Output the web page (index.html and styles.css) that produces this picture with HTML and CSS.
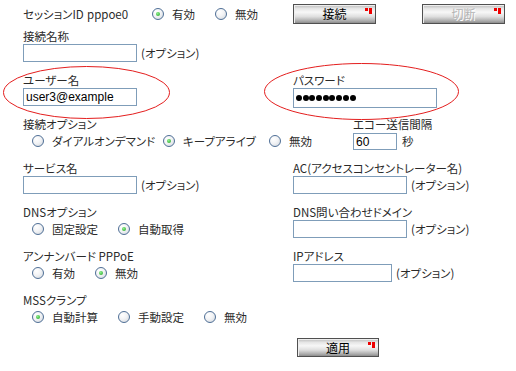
FILE: index.html
```html
<!DOCTYPE html>
<html lang="ja">
<head>
<meta charset="utf-8">
<link rel="stylesheet" href="styles.css">
</head>
<body>
<div class="page">
  <div class="sec top">
    <div class="row">
      <span class="sid">セッションID</span><span class="sval">pppoe0</span>
      <span class="opts">
        <span class="opt"><i class="radio on"></i>有効</span>
        <span class="opt"><i class="radio"></i>無効</span>
      </span>
    </div>
    <div class="btns">
      <span class="btn">接続</span>
      <span class="btn disabled">切断</span>
    </div>
  </div>

  <div class="sec f">
    <div>
      <div class="lbl">接続名称</div>
      <div class="ctl"><span class="inp"></span><span class="hint">(オプション)</span></div>
    </div>
  </div>

  <div class="sec f">
    <div>
      <div class="lbl">ユーザー名</div>
      <div class="ctl"><span class="inp">user3@example</span></div>
    </div>
    <div>
      <div class="lbl">パスワード</div>
      <div class="ctl"><span class="inp pw"><i></i><i></i><i></i><i></i><i></i><i></i><i></i><i></i><i></i></span></div>
    </div>
  </div>

  <div class="sec f wide">
    <div>
      <div class="lbl">接続オプション</div>
      <div class="ctl radios conn">
        <span class="opt"><i class="radio"></i>ダイアルオンデマンド</span>
        <span class="opt"><i class="radio on"></i>キープアライブ</span>
        <span class="opt"><i class="radio"></i>無効</span>
      </div>
    </div>
    <div>
      <div class="lbl">エコー送信間隔</div>
      <div class="ctl"><span class="inp echo">60</span><span class="unit">秒</span></div>
    </div>
  </div>

  <div class="sec f">
    <div>
      <div class="lbl">サービス名</div>
      <div class="ctl"><span class="inp"></span><span class="hint">(オプション)</span></div>
    </div>
    <div>
      <div class="lbl">AC(アクセスコンセントレーター名)</div>
      <div class="ctl"><span class="inp"></span><span class="hint">(オプション)</span></div>
    </div>
  </div>

  <div class="sec f">
    <div>
      <div class="lbl">DNSオプション</div>
      <div class="ctl radios">
        <span class="opt"><i class="radio"></i>固定設定</span>
        <span class="opt"><i class="radio on"></i>自動取得</span>
      </div>
    </div>
    <div>
      <div class="lbl">DNS問い合わせドメイン</div>
      <div class="ctl"><span class="inp"></span><span class="hint">(オプション)</span></div>
    </div>
  </div>

  <div class="sec f">
    <div>
      <div class="lbl">アンナンバード PPPoE</div>
      <div class="ctl radios">
        <span class="opt"><i class="radio"></i>有効</span>
        <span class="opt"><i class="radio on"></i>無効</span>
      </div>
    </div>
    <div>
      <div class="lbl">IPアドレス</div>
      <div class="ctl"><span class="inp ip"></span><span class="hint">(オプション)</span></div>
    </div>
  </div>

  <div class="sec f">
    <div>
      <div class="lbl">MSSクランプ</div>
      <div class="ctl radios">
        <span class="opt"><i class="radio on"></i>自動計算</span>
        <span class="opt"><i class="radio"></i>手動設定</span>
        <span class="opt"><i class="radio"></i>無効</span>
      </div>
    </div>
  </div>

  <div class="apply"><span class="btn">適用</span></div>

  <svg class="marks" width="516" height="371" viewBox="0 0 516 371">
    <ellipse cx="86.5" cy="92.5" rx="83" ry="26" fill="none" stroke="#e41e1e" stroke-width="1"/>
    <ellipse cx="361.5" cy="91.5" rx="97" ry="28" fill="none" stroke="#e41e1e" stroke-width="1"/>
  </svg>
</div>
</body>
</html>
```

FILE: styles.css
```css
html, body {
  margin: 0;
  background: #fff;
}
body {
  font-family: "Noto Sans CJK JP", sans-serif;
  font-size: 11.5px;
  color: #2a2a2a;
  font-feature-settings: "palt" 1;
}
.page {
  position: relative;
  width: 516px;
  height: 371px;
  padding-left: 23px;
  box-sizing: border-box;
  overflow: hidden;
}
.sec {
  display: grid;
  grid-template-columns: 270px 1fr;
}
.sec.wide {
  grid-template-columns: 330px 1fr;
}
.sec.top {
  height: 20px;
  padding-top: 4px;
  margin-bottom: 4px;
  align-items: center;
}
.sec.f {
  margin-bottom: 10px;
}
.row {
  display: flex;
  align-items: center;
  line-height: 16px;
}
.sid { width: 64px; white-space: nowrap; }
.sval { width: 65px; }
.opts {
  display: flex;
  align-items: center;
  gap: 20px;
}
.opt {
  display: flex;
  align-items: center;
  white-space: nowrap;
}
.radios {
  gap: 20px;
  padding-left: 9px;
}
.radios.conn {
  display: grid;
  grid-template-columns: 131px 106px auto;
  gap: 0;
}
.radio {
  display: inline-block;
  position: relative;
  width: 12px;
  height: 12px;
  box-sizing: border-box;
  border-radius: 50%;
  border: 1px solid #4f6f96;
  background: radial-gradient(circle at 35% 30%, #ffffff 0%, #f2f3f5 45%, #cfd5dc 100%);
  margin-right: 8px;
  flex: none;
}
.radio.on::after {
  content: "";
  position: absolute;
  left: 3px;
  top: 3px;
  width: 4px;
  height: 4px;
  border-radius: 50%;
  background: radial-gradient(circle at 40% 35%, #8ef08e, #1f9f1f);
}
.lbl {
  height: 16px;
  line-height: 16px;
  white-space: nowrap;
}
.ctl {
  display: flex;
  align-items: center;
  height: 18px;
}
.inp {
  display: block;
  box-sizing: border-box;
  width: 114px;
  height: 18px;
  border: 1px solid #7f9db9;
  background: #fff;
  padding: 0 2px;
  font-family: "Liberation Sans", Arial, sans-serif;
  font-size: 12px;
  line-height: 16px;
  color: #000;
  font-feature-settings: normal;
}
.inp.pw {
  width: 144px;
  height: 20px;
  display: flex;
  align-items: center;
  gap: 0.7px;
  padding-left: 2px;
  margin-top: 1px;
}
.inp.pw i {
  display: block;
  width: 6px;
  height: 6px;
  border-radius: 50%;
  background: #000;
}
.inp.echo {
  width: 44px;
  height: 17px;
}
.inp.ip {
  width: 99px;
}
.hint {
  margin-left: 4px;
  white-space: nowrap;
}
.unit {
  margin-left: 5px;
}
.btns {
  display: flex;
  gap: 46px;
}
.btn {
  position: relative;
  display: flex;
  align-items: center;
  justify-content: center;
  width: 83px;
  height: 20px;
  box-sizing: border-box;
  border: 1px solid #505050;
  background: linear-gradient(#b9b9b9 0%, #e6e6e6 20%, #f7f7f7 40%, #dedede 65%, #a8a8a8 90%, #8c8c8c 100%);
  box-shadow: inset 1px 1px 0 #eeeeee;
  color: #000;
  font-size: 12px;
  line-height: 16px;
}
.btn::before,
.btn::after {
  content: "";
  position: absolute;
  background: #ee0000;
}
.btn::before {
  top: 3px;
  right: 7px;
  width: 3px;
  height: 3px;
}
.btn::after {
  top: 3px;
  right: 3px;
  width: 3px;
  height: 6px;
}
.btn.disabled {
  color: #b4b4b4;
  text-shadow: 1px 1px 0 #ffffff;
}
.apply {
  margin-top: 12px;
  padding-left: 274px;
  display: flex;
}
.apply .btn {
  width: 82px;
  height: 19px;
}
.marks {
  position: absolute;
  left: 0;
  top: 0;
  pointer-events: none;
}
```
